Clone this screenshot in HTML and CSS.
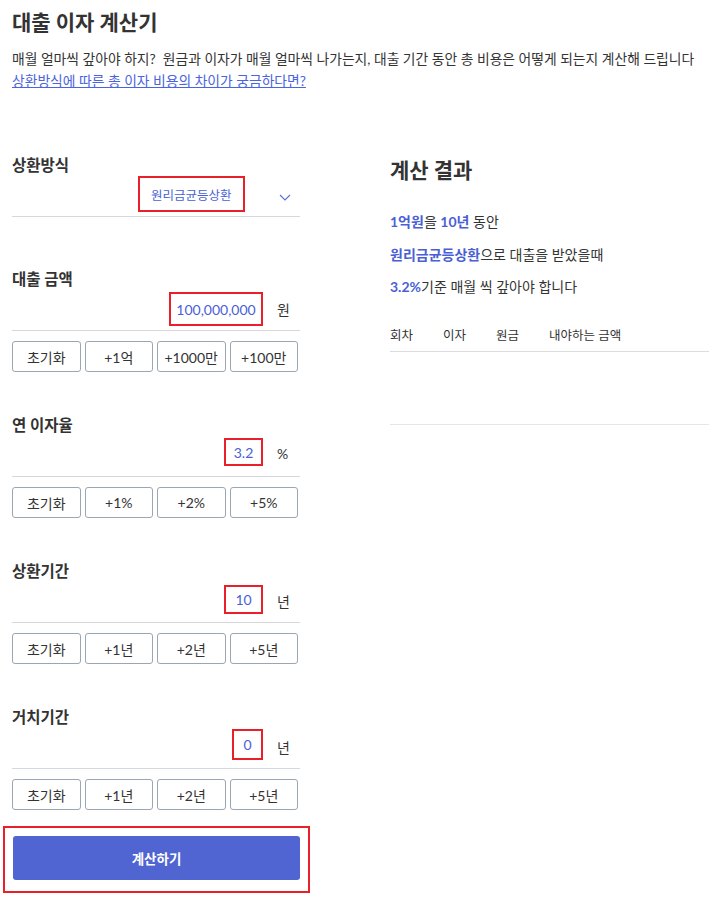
FILE: index.html
```html
<!DOCTYPE html>
<html lang="ko">

<head>
    <meta charset="UTF-8">
    <meta name="viewport" content="width=device-width, initial-scale=1.0">
    <link rel="stylesheet" href="styles.css">
    <title>대출 이자 계산기</title>
</head>

<body>

    <div class="page">
        <h1 class="title">대출 이자 계산기</h1>
        <p class="desc">매월 얼마씩 갚아야 하지? &nbsp;원금과 이자가 매월 얼마씩 나가는지, 대출 기간 동안 총 비용은 어떻게 되는지 계산해 드립니다</p>
        <a class="link" href="#">상환방식에 따른 총 이자 비용의 차이가 궁금하다면?</a>

        <div class="main">
            <form class="form">
                <div class="field field-first">
                    <div class="label">상환방식</div>
                    <div class="select-row">
                        <div class="select">원리금균등상환</div>
                        <svg class="chevron" width="12" height="7" viewBox="0 0 12 7">
                            <path d="M1 1l5 5 5-5" fill="none" stroke="#5b6fd8" stroke-width="1.1" />
                        </svg>
                    </div>
                </div>

                <div class="field">
                    <div class="label">대출 금액</div>
                    <div class="input-row">
                        <div class="value value-amount">100,000,000</div>
                        <span class="unit">원</span>
                    </div>
                    <div class="buttons">
                        <button type="button">초기화</button>
                        <button type="button">+1억</button>
                        <button type="button">+1000만</button>
                        <button type="button">+100만</button>
                    </div>
                </div>

                <div class="field">
                    <div class="label">연 이자율</div>
                    <div class="input-row">
                        <div class="value value-rate">3.2</div>
                        <span class="unit">%</span>
                    </div>
                    <div class="buttons">
                        <button type="button">초기화</button>
                        <button type="button">+1%</button>
                        <button type="button">+2%</button>
                        <button type="button">+5%</button>
                    </div>
                </div>

                <div class="field">
                    <div class="label">상환기간</div>
                    <div class="input-row">
                        <div class="value value-term">10</div>
                        <span class="unit">년</span>
                    </div>
                    <div class="buttons">
                        <button type="button">초기화</button>
                        <button type="button">+1년</button>
                        <button type="button">+2년</button>
                        <button type="button">+5년</button>
                    </div>
                </div>

                <div class="field">
                    <div class="label">거치기간</div>
                    <div class="input-row">
                        <div class="value value-grace">0</div>
                        <span class="unit">년</span>
                    </div>
                    <div class="buttons">
                        <button type="button">초기화</button>
                        <button type="button">+1년</button>
                        <button type="button">+2년</button>
                        <button type="button">+5년</button>
                    </div>
                </div>

                <div class="submit-wrap">
                    <button type="button" class="submit">계산하기</button>
                </div>
            </form>

            <div class="result">
                <h2 class="result-title">계산 결과</h2>
                <p class="line"><b>1억원</b>을 <b>10년</b> 동안</p>
                <p class="line"><b>원리금균등상환</b>으로 대출을 받았을때</p>
                <p class="line"><b>3.2%</b>기준 매월 씩 갚아야 합니다</p>

                <div class="table">
                    <div class="thead">
                        <span>회차</span>
                        <span>이자</span>
                        <span>원금</span>
                        <span>내야하는 금액</span>
                    </div>
                    <div class="tbody"></div>
                </div>
            </div>
        </div>
    </div>

</body>

</html>
```

FILE: styles.css
```css
body {
    margin: 0;
    font-family: Lato, "Noto Sans CJK KR", sans-serif;
    color: #333;
    background: #fff;
}

.page {
    padding: 6px 12px 0;
}

.title {
    margin: 0;
    font-size: 21px;
    line-height: 32px;
    font-weight: 700;
}

.desc {
    margin: 10px 0 0;
    font-size: 13.8px;
    line-height: 22px;
}

.link {
    font-size: 13.8px;
    line-height: 22px;
    color: #4a63e0;
}

.main {
    display: flex;
    gap: 90px;
    margin-top: 62px;
}

.form {
    width: 288px;
    flex-shrink: 0;
}

.field {
    margin-top: 42px;
}

.field-first {
    margin-top: 0;
    margin-bottom: 51px;
}

.label {
    font-size: 15.5px;
    font-weight: 700;
    line-height: 22px;
}

.select-row,
.input-row {
    display: flex;
    align-items: flex-start;
    border-bottom: 1px solid #d6d8db;
    height: 40px;
}

.select-row {
    padding-left: 126px;
}

.select {
    border: 2px solid #e8202a;
    height: 36px;
    box-sizing: border-box;
    padding: 0 11px;
    display: flex;
    align-items: center;
    font-size: 12.5px;
    color: #4a5fd6;
}

.chevron {
    margin: 18px 0 0 34px;
}

.input-row {
    justify-content: flex-end;
}

.value {
    border: 2px solid #e8202a;
    box-sizing: border-box;
    margin-top: 2px;
    display: flex;
    align-items: center;
    justify-content: center;
    font-size: 14px;
    color: #4a5fd6;
}

.value-amount {
    width: 94px;
    height: 34px;
}

.value-rate {
    width: 39px;
    height: 28px;
}

.value-term {
    width: 39px;
    height: 29px;
    margin-top: 3px;
}

.value-grace {
    width: 31px;
    height: 31px;
    margin-top: 1px;
}

.unit {
    font-size: 14px;
    width: 37px;
    padding: 9px 0 0 14px;
    box-sizing: border-box;
}

.buttons {
    display: grid;
    grid-template-columns: repeat(4, 1fr);
    gap: 4px;
    margin-top: 10px;
    width: 286px;
}

.buttons button {
    height: 31px;
    background: #fff;
    border: 1px solid #9aa6b2;
    border-radius: 3px;
    font-family: inherit;
    font-size: 14px;
    color: #333;
}

.submit-wrap {
    border: 2px solid #e8202a;
    padding: 8px 8px 11px;
    margin: 16px -10px 0 -9px;
}

.submit {
    display: block;
    width: 100%;
    height: 44px;
    border: 0;
    border-radius: 3px;
    background: #5064d2;
    color: #fff;
    font-family: inherit;
    font-size: 13.5px;
    font-weight: 700;
}

.result {
    flex: 1;
    padding-top: 1px;
}

.result-title {
    margin: 0;
    font-size: 21px;
    line-height: 30px;
    font-weight: 700;
}

.line {
    margin: 0;
    font-size: 14px;
    line-height: 32.5px;
}

.result-title + .line {
    margin-top: 21px;
}

.line b {
    color: #4a5fd6;
}

.table {
    margin-top: 17px;
    margin-right: -12px;
}

.thead {
    display: flex;
    font-size: 12.5px;
    line-height: 30px;
    border-bottom: 1px solid #dcdcdc;
}

.thead span:nth-child(1),
.thead span:nth-child(2),
.thead span:nth-child(3) {
    width: 53px;
}

.tbody {
    height: 72px;
    border-bottom: 1px solid #e6e6e6;
}
```
